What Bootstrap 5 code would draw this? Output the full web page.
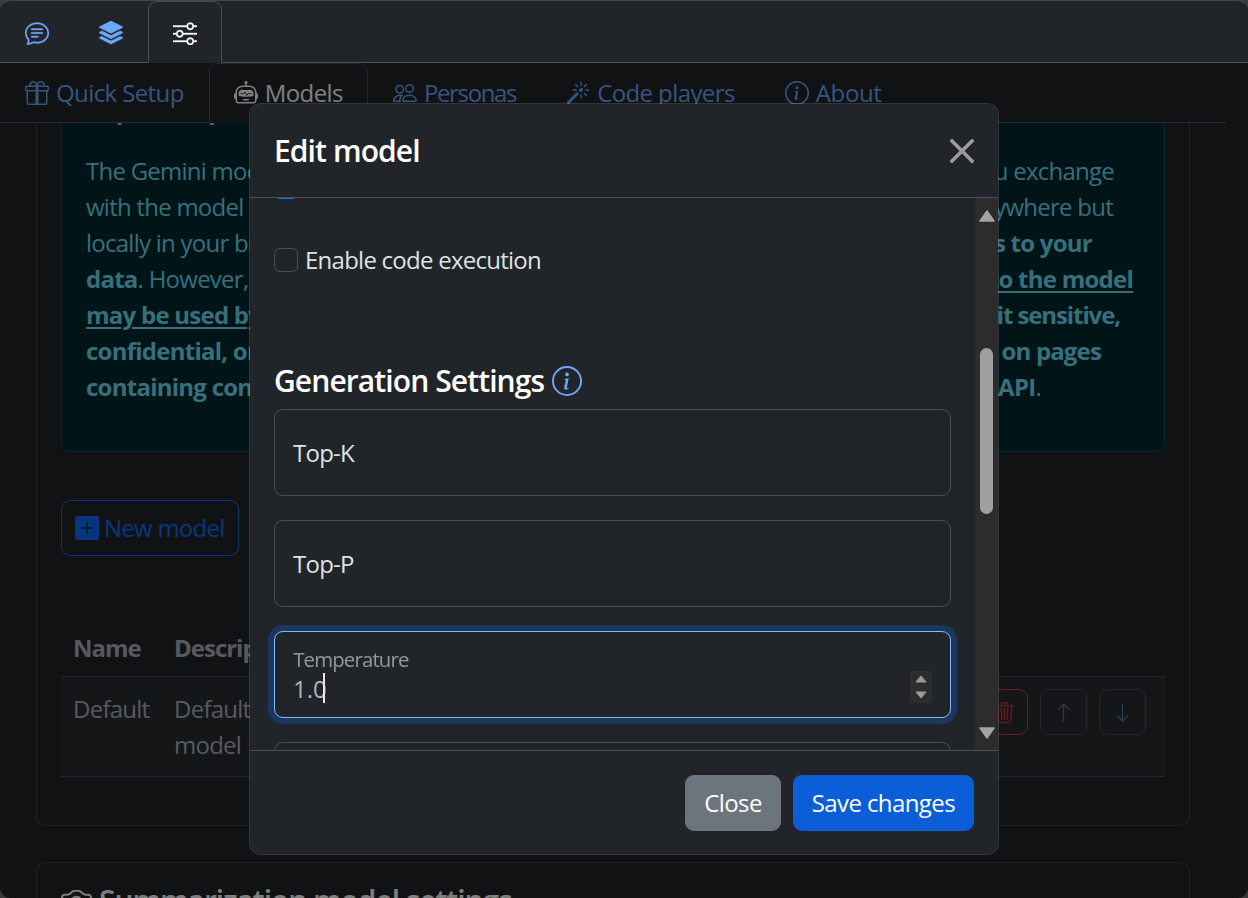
<!doctype html>
<html lang="en" data-bs-theme="dark">
<head>
<meta charset="utf-8">
<title>Edit model</title>
<link href="https://cdn.jsdelivr.net/npm/bootstrap@5.3.0/dist/css/bootstrap.min.css" rel="stylesheet">
<script src="https://cdn.jsdelivr.net/npm/bootstrap@5.3.0/dist/js/bootstrap.bundle.min.js"></script>
<style>
html{font-size:24px}
html,body{height:100%;overflow:hidden}
body{--bs-body-font-family:"Open Sans","Noto Sans",sans-serif;font-family:"Open Sans","Noto Sans",sans-serif;background:#3c3c3c;letter-spacing:-.75px;margin:0}
.shell{height:898px;display:flex;flex-direction:column;border-radius:11px;overflow:hidden;background:#212529;border-top:1px solid #44474a}
.ico{width:1em;height:1em;fill:currentColor;flex:none}
.topbar{height:62px;flex:none}
.topbar .nav-link{padding:14px 24px 12px;height:62px;display:flex;align-items:center}
.topbar .ico{stroke:currentColor;stroke-width:.2}
.stage{flex:1;position:relative;overflow:hidden;min-height:0}
.dimmer{position:absolute;inset:0;background:rgba(0,0,0,.5);z-index:1}
.pane{width:1226px;height:100%;overflow:hidden;position:relative;z-index:0}
.subnav{position:relative;z-index:1;background:#212529;height:60px;flex-wrap:nowrap;letter-spacing:-.6px}
.subnav .nav-link{padding:11px 24px 11px;display:flex;align-items:center;gap:7px;height:60px;white-space:nowrap}
.tight-tab{letter-spacing:-1.35px}
.wide-tab{letter-spacing:-.35px}
.scroller{padding:0 36px;margin-top:-32px}
.settings-card{padding:0 24px;height:735px;border-top:0}
.note{margin:0;padding:0 24px 46px;border-radius:9px}
.note-head{font-size:24px;line-height:36px;font-weight:700;margin:0 0 25px}
.note-line{display:flex;justify-content:space-between;white-space:nowrap;line-height:36px}
.note-line u{text-underline-offset:3px}
.r1{margin-right:26px}.r2{margin-right:27px}.r3{margin-right:48px}.r4{margin-right:7px}.r5{margin-right:20px;letter-spacing:-1.1px}.r6{margin-right:39px;letter-spacing:-.85px}.r7{margin-right:99px}
.new-btn{margin-top:48px;display:inline-flex;align-items:center;gap:5px;height:56px;width:178px;padding:0 13px;letter-spacing:-.75px;white-space:nowrap}
.models{margin-top:60px;margin-bottom:0}
.models th{padding:14px 12px 10px;height:56px;border-bottom-width:1px;letter-spacing:-1px}
.models td{padding:14px 12px 13px;height:100px;--bs-table-bg:rgba(255,255,255,.035)}
.cw1{width:101px}
.models td.act-cell{text-align:right;white-space:nowrap;padding:12px 19px 0 0}
.act-cell .btn{width:47px;height:46px;padding:0;display:inline-flex;align-items:center;justify-content:center;font-size:21px;margin-left:12px;--bs-btn-border-color:#495057;vertical-align:top}
.act-cell .btn.btn-outline-danger{--bs-btn-border-color:#dc3545}
.act-cell .btn.move-down{--bs-btn-color:#5a7ca0}
.next-card{margin-top:36px;padding:20px 24px;height:100px}
.next-title{font-size:30px;font-weight:600;line-height:36px;margin:0;display:flex;align-items:center;gap:7px;letter-spacing:-1.05px;white-space:nowrap}
.next-title .ico{font-size:31px}
.editor{position:absolute;left:249px;top:40px;width:750px;z-index:2;
 --bs-modal-bg:#212529;--bs-modal-color:#dee2e6;--bs-modal-border-width:1px;--bs-modal-border-color:rgba(255,255,255,.15);
 --bs-modal-border-radius:12px;--bs-modal-inner-border-radius:11px;--bs-modal-box-shadow:none;
 --bs-modal-header-padding:24px;--bs-modal-header-padding-x:24px;--bs-modal-header-padding-y:24px;
 --bs-modal-header-border-width:1px;--bs-modal-header-border-color:#495057;
 --bs-modal-footer-border-width:1px;--bs-modal-footer-border-color:#495057;--bs-modal-footer-gap:12px;--bs-modal-padding:24px;
 color:#dee2e6}
.editor .modal-title{font-size:30px;font-weight:600;line-height:45px;letter-spacing:-.9px;margin:0}
.editor .modal-header{height:94px}
.editor .btn-close{padding:0;width:28px;height:28px;margin:0 -2px 0 auto;background-size:28px;opacity:.55}
.bodywrap{display:flex;height:552px;background:#212529}
.formcol{flex:1;overflow:hidden;padding:0 24px;min-width:0}
.chk-row{display:flex;align-items:center;gap:7px;line-height:36px}
.chk-row .form-check-input{margin:0;width:24px;height:24px;flex:none}
.chk-top{margin-top:-23px;height:24px}
.chk-code{margin-top:49px;height:72px;align-items:flex-start}
.chk-code label{margin-top:-6px}
.gen-title{font-size:30px;font-weight:600;line-height:36px;margin:43px 0 10px;display:flex;align-items:center;gap:8px;letter-spacing:-.9px}
.gen-title .ico{color:#6ea8fe;font-size:30px}
.fld{margin-bottom:24px}
.fld .form-control{height:87px;min-height:87px}
.fld label{padding:25px 18px;color:#dee2e6}
.fld .form-control:not(:placeholder-shown){padding-top:41px;padding-bottom:13px}
.fld .faux-focus{border-color:#86b7fe;box-shadow:0 0 0 6px rgba(13,110,253,.25)}
.form-floating.fld>.form-control.faux-focus~label{opacity:.6;letter-spacing:-1px;padding-top:26px}
.caret-bar{position:absolute;left:49px;top:42px;width:2px;height:30px;background:#e8e8e8}
.spin{position:absolute;right:19px;top:40px;width:22px;height:32px;background:#2d2d2d;display:flex;flex-direction:column;align-items:center;justify-content:center;gap:8px}
.spin svg{width:12px;height:8px;fill:#9a9a9a;display:block;stroke:#9a9a9a;stroke-linejoin:round}
.vbar{width:23px;flex:none;background:#2c2c2c;display:flex;flex-direction:column;align-items:center}
.vbar svg{fill:#a3a3a3;width:16px;height:12px;flex:none;stroke:#a3a3a3;stroke-linejoin:round;stroke-width:1.5}
.vbar .up{margin-top:12px}
.vbar .thumb{width:13px;height:166px;background:#9f9f9f;border-radius:7px;margin-top:126px}
.vbar .down{margin-top:auto;margin-bottom:11px}
.editor .modal-footer{height:104px;padding:18px;border-top:1px solid #495057;display:flex;justify-content:flex-end;align-items:center}
.editor .btn{height:56px;margin:6px;letter-spacing:-.6px}
.editor .btn-primary{--bs-btn-bg:#0b5ed7;--bs-btn-border-color:#0b5ed7}
</style>
</head>
<body>
<svg width="0" height="0" class="d-none" aria-hidden="true">
<symbol id="i-chat" viewBox="0 0 16 16"><path d="M2.678 11.894a1 1 0 0 1 .287.801 10.97 10.97 0 0 1-.398 2c1.395-.323 2.247-.697 2.634-.893a1 1 0 0 1 .71-.074A8.06 8.06 0 0 0 8 14c3.996 0 7-2.807 7-6 0-3.192-3.004-6-7-6S1 4.808 1 8c0 1.468.617 2.83 1.678 3.894zm-.493 3.905a21.682 21.682 0 0 1-.713.129c-.2.032-.352-.176-.273-.362a9.68 9.68 0 0 0 .244-.637l.003-.01c.248-.72.45-1.548.524-2.319C.743 11.37 0 9.76 0 8c0-3.866 3.582-7 8-7s8 3.134 8 7-3.582 7-8 7a9.06 9.06 0 0 1-2.347-.306c-.52.263-1.639.742-3.468 1.105z"/><path d="M4 5.5a.5.5 0 0 1 .5-.5h7a.5.5 0 0 1 0 1h-7a.5.5 0 0 1-.5-.5zM4 8a.5.5 0 0 1 .5-.5h7a.5.5 0 0 1 0 1h-7A.5.5 0 0 1 4 8zm0 2.5a.5.5 0 0 1 .5-.5h4a.5.5 0 0 1 0 1h-4a.5.5 0 0 1-.5-.5z"/></symbol>
<symbol id="i-stack" viewBox="0 0 16 16"><path d="m14.12 10.163 1.715.858c.22.11.22.424 0 .534L8.267 15.34a.598.598 0 0 1-.534 0L.165 11.555a.299.299 0 0 1 0-.534l1.716-.858 5.317 2.659c.505.252 1.1.252 1.604 0l5.317-2.66zM7.733.063a.598.598 0 0 1 .534 0l7.568 3.784a.3.3 0 0 1 0 .535L8.267 8.165a.598.598 0 0 1-.534 0L.165 4.382a.299.299 0 0 1 0-.535L7.733.063z"/><path d="m14.12 6.576 1.715.858c.22.11.22.424 0 .534l-7.568 3.784a.598.598 0 0 1-.534 0L.165 7.968a.299.299 0 0 1 0-.534l1.716-.858 5.317 2.659c.505.252 1.1.252 1.604 0l5.317-2.659z"/></symbol>
<symbol id="i-sliders" viewBox="0 0 16 16"><path fill-rule="evenodd" d="M11.5 2a1.5 1.5 0 1 0 0 3 1.5 1.5 0 0 0 0-3zM9.05 3a2.5 2.5 0 0 1 4.9 0H16v1h-2.05a2.5 2.5 0 0 1-4.9 0H0V3h9.05zM4.5 7a1.5 1.5 0 1 0 0 3 1.5 1.5 0 0 0 0-3zM2.05 8a2.5 2.5 0 0 1 4.9 0H16v1H6.95a2.5 2.5 0 0 1-4.9 0H0V8h2.05zm9.45 4a1.5 1.5 0 1 0 0 3 1.5 1.5 0 0 0 0-3zm-2.45 1a2.5 2.5 0 0 1 4.9 0H16v1h-2.05a2.5 2.5 0 0 1-4.9 0H0v-1h9.05z"/></symbol>
<symbol id="i-gift" viewBox="0 0 16 16"><path d="M3 2.5a2.5 2.5 0 0 1 5 0 2.5 2.5 0 0 1 5 0v.006c0 .07 0 .27-.038.494H15a1 1 0 0 1 1 1v2a1 1 0 0 1-1 1v7.5a1.5 1.5 0 0 1-1.5 1.5h-11A1.5 1.5 0 0 1 1 14.5V7a1 1 0 0 1-1-1V4a1 1 0 0 1 1-1h2.038A2.968 2.968 0 0 1 3 2.506V2.5zm1.068.5H7v-.5a1.5 1.5 0 1 0-3 0c0 .085.002.274.045.43a.522.522 0 0 0 .023.07zM9 3h2.932a.56.56 0 0 0 .023-.07c.043-.156.045-.345.045-.43a1.5 1.5 0 0 0-3 0V3zM1 4v2h6V4H1zm8 0v2h6V4H9zm5 3H9v8h4.5a.5.5 0 0 0 .5-.5V7zm-7 8V7H2v7.5a.5.5 0 0 0 .5.5H7z"/></symbol>
<symbol id="i-robot" viewBox="0 0 16 16"><path d="M6 12.5a.5.5 0 0 1 .5-.5h3a.5.5 0 0 1 0 1h-3a.5.5 0 0 1-.5-.5ZM3 8.062C3 6.76 4.235 5.765 5.53 5.886a26.58 26.58 0 0 0 4.94 0C11.765 5.765 13 6.76 13 8.062v1.157a.933.933 0 0 1-.765.935c-.845.147-2.34.346-4.235.346-1.895 0-3.39-.2-4.235-.346A.933.933 0 0 1 3 9.219V8.062Zm4.542-.827a.25.25 0 0 0-.217.068l-.92.9a24.767 24.767 0 0 1-1.871-.183.25.25 0 0 0-.068.495c.55.076 1.232.149 2.02.193a.25.25 0 0 0 .189-.071l.754-.736.847 1.71a.25.25 0 0 0 .404.062l.932-.97a25.286 25.286 0 0 0 1.922-.188.25.25 0 0 0-.068-.495c-.538.074-1.207.145-1.98.189a.25.25 0 0 0-.166.076l-.754.785-.842-1.7a.25.25 0 0 0-.182-.135Z"/><path d="M8.5 1.866a1 1 0 1 0-1 0V3h-2A4.5 4.5 0 0 0 1 7.5V8a1 1 0 0 0-1 1v2a1 1 0 0 0 1 1v1a2 2 0 0 0 2 2h10a2 2 0 0 0 2-2v-1a1 1 0 0 0 1-1V9a1 1 0 0 0-1-1v-.5A4.5 4.5 0 0 0 10.5 3h-2V1.866ZM14 7.5V13a1 1 0 0 1-1 1H3a1 1 0 0 1-1-1V7.5A3.5 3.5 0 0 1 5.5 4h5A3.5 3.5 0 0 1 14 7.5Z"/></symbol>
<symbol id="i-people" viewBox="0 0 16 16"><path d="M15 14s1 0 1-1-1-4-5-4-5 3-5 4 1 1 1 1h8Zm-7.978-1A.261.261 0 0 1 7 12.996c.001-.264.167-1.03.76-1.72C8.312 10.629 9.282 10 11 10c1.717 0 2.687.63 3.24 1.276.593.69.758 1.457.76 1.72l-.008.002a.274.274 0 0 1-.014.002H7.022ZM11 7a2 2 0 1 0 0-4 2 2 0 0 0 0 4Zm3-2a3 3 0 1 1-6 0 3 3 0 0 1 6 0ZM6.936 9.28a5.88 5.88 0 0 0-1.23-.247A7.35 7.35 0 0 0 5 9c-4 0-5 3-5 4 0 .667.333 1 1 1h4.216A2.238 2.238 0 0 1 5 13c0-1.01.377-2.042 1.09-2.904.243-.294.526-.569.846-.816ZM4.92 10A5.493 5.493 0 0 0 4 13H1c0-.26.164-1.03.76-1.724.545-.636 1.492-1.256 3.16-1.275ZM1.5 5.5a3 3 0 1 1 6 0 3 3 0 0 1-6 0Zm3-2a2 2 0 1 0 0 4 2 2 0 0 0 0-4Z"/></symbol>
<symbol id="i-magic" viewBox="0 0 16 16"><path d="M9.5 2.672a.5.5 0 1 0 1 0V.843a.5.5 0 0 0-1 0v1.829Zm4.5.035A.5.5 0 0 0 13.293 2L12 3.293a.5.5 0 1 0 .707.707L14 2.707ZM7.293 4A.5.5 0 1 0 8 3.293L6.707 2A.5.5 0 0 0 6 2.707L7.293 4Zm-.621 2.5a.5.5 0 1 0 0-1H4.843a.5.5 0 1 0 0 1h1.829Zm8.485 0a.5.5 0 1 0 0-1h-1.829a.5.5 0 0 0 0 1h1.829ZM13.293 10A.5.5 0 1 0 14 9.293L12.707 8a.5.5 0 1 0-.707.707L13.293 10ZM9.5 11.157a.5.5 0 0 0 1 0V9.328a.5.5 0 0 0-1 0v1.829Zm1.854-5.097a.5.5 0 0 0 0-.706l-.708-.708a.5.5 0 0 0-.707 0L8.646 5.94a.5.5 0 0 0 0 .707l.708.708a.5.5 0 0 0 .707 0l1.293-1.293Zm-3 3a.5.5 0 0 0 0-.706l-.708-.708a.5.5 0 0 0-.707 0L.646 13.94a.5.5 0 0 0 0 .707l.708.708a.5.5 0 0 0 .707 0L8.354 9.06Z"/></symbol>
<symbol id="i-info" viewBox="0 0 16 16"><path d="M8 15A7 7 0 1 1 8 1a7 7 0 0 1 0 14zm0 1A8 8 0 1 0 8 0a8 8 0 0 0 0 16z"/><path d="m8.93 6.588-2.29.287-.082.38.45.083c.294.07.352.176.288.469l-.738 3.468c-.194.897.105 1.319.808 1.319.545 0 1.178-.252 1.465-.598l.088-.416c-.2.176-.492.246-.686.246-.275 0-.375-.193-.304-.533L8.93 6.588zM9 4.5a1 1 0 1 1-2 0 1 1 0 0 1 2 0z"/></symbol>
<symbol id="i-plus" viewBox="0 0 16 16"><path d="M2 0a2 2 0 0 0-2 2v12a2 2 0 0 0 2 2h12a2 2 0 0 0 2-2V2a2 2 0 0 0-2-2H2zm6.5 4.5v3h3a.5.5 0 0 1 0 1h-3v3a.5.5 0 0 1-1 0v-3h-3a.5.5 0 0 1 0-1h3v-3a.5.5 0 0 1 1 0z"/></symbol>
<symbol id="i-trash" viewBox="0 0 16 16"><path d="M6.5 1h3a.5.5 0 0 1 .5.5v1H6v-1a.5.5 0 0 1 .5-.5ZM11 2.5v-1A1.5 1.5 0 0 0 9.5 0h-3A1.5 1.5 0 0 0 5 1.5v1H2.506a.58.58 0 0 0-.01 0H1.5a.5.5 0 0 0 0 1h.538l.853 10.66A2 2 0 0 0 4.885 16h6.23a2 2 0 0 0 1.994-1.84l.853-10.66h.538a.5.5 0 0 0 0-1h-.995a.59.59 0 0 0-.01 0H11Zm1.958 1-.846 10.58a1 1 0 0 1-.997.92h-6.23a1 1 0 0 1-.997-.92L3.042 3.5h9.916Zm-7.487 1a.5.5 0 0 1 .528.47l.5 8.5a.5.5 0 0 1-.998.06L5 5.03a.5.5 0 0 1 .47-.53Zm5.058 0a.5.5 0 0 1 .47.53l-.5 8.5a.5.5 0 1 1-.998-.06l.5-8.5a.5.5 0 0 1 .528-.47ZM8 4.5a.5.5 0 0 1 .5.5v8.5a.5.5 0 0 1-1 0V5a.5.5 0 0 1 .5-.5Z"/></symbol>
<symbol id="i-up" viewBox="0 0 16 16"><path fill-rule="evenodd" d="M8 15a.5.5 0 0 0 .5-.5V2.707l3.146 3.147a.5.5 0 0 0 .708-.708l-4-4a.5.5 0 0 0-.708 0l-4 4a.5.5 0 1 0 .708.708L7.5 2.707V14.5a.5.5 0 0 0 .5.5z"/></symbol>
<symbol id="i-down" viewBox="0 0 16 16"><path fill-rule="evenodd" d="M8 1a.5.5 0 0 1 .5.5v11.793l3.146-3.147a.5.5 0 0 1 .708.708l-4 4a.5.5 0 0 1-.708 0l-4-4a.5.5 0 0 1 .708-.708L7.5 13.293V1.5A.5.5 0 0 1 8 1z"/></symbol>
<symbol id="i-camera" viewBox="0 0 16 16"><path d="M15 12a1 1 0 0 1-1 1H2a1 1 0 0 1-1-1V6a1 1 0 0 1 1-1h1.172a3 3 0 0 0 2.12-.879l.83-.828A1 1 0 0 1 6.827 3h2.344a1 1 0 0 1 .707.293l.828.828A3 3 0 0 0 12.828 5H14a1 1 0 0 1 1 1v6zM2 4a2 2 0 0 0-2 2v6a2 2 0 0 0 2 2h12a2 2 0 0 0 2-2V6a2 2 0 0 0-2-2h-1.172a2 2 0 0 1-1.414-.586l-.828-.828A2 2 0 0 0 9.172 2H6.828a2 2 0 0 0-1.414.586l-.828.828A2 2 0 0 1 3.172 4H2z"/><path d="M8 11a2.5 2.5 0 1 1 0-5 2.5 2.5 0 0 1 0 5zm0 1a3.5 3.5 0 1 0 0-7 3.5 3.5 0 0 0 0 7zM3 6.5a.5.5 0 1 1-1 0 .5.5 0 0 1 1 0z"/></symbol>
</svg>

<div class="shell">
  <ul class="nav nav-tabs topbar">
    <li class="nav-item"><a class="nav-link" href="#" aria-label="Chat"><svg class="ico"><use href="#i-chat"/></svg></a></li>
    <li class="nav-item"><a class="nav-link" href="#" aria-label="Sessions"><svg class="ico"><use href="#i-stack"/></svg></a></li>
    <li class="nav-item"><a class="nav-link active" href="#" aria-label="Settings"><svg class="ico"><use href="#i-sliders"/></svg></a></li>
  </ul>
  <div class="stage">
    <div class="pane">
      <ul class="nav nav-tabs subnav">
        <li class="nav-item"><a class="nav-link" href="#"><svg class="ico"><use href="#i-gift"/></svg>Quick Setup</a></li>
        <li class="nav-item"><a class="nav-link active" href="#"><svg class="ico"><use href="#i-robot"/></svg>Models</a></li>
        <li class="nav-item"><a class="nav-link tight-tab" href="#"><svg class="ico"><use href="#i-people"/></svg>Personas</a></li>
        <li class="nav-item"><a class="nav-link" href="#"><svg class="ico"><use href="#i-magic"/></svg>Code players</a></li>
        <li class="nav-item"><a class="nav-link wide-tab" href="#"><svg class="ico"><use href="#i-info"/></svg>About</a></li>
      </ul>
      <div class="scroller">
        <div class="card settings-card">
          <div class="alert alert-info note" role="alert">
            <p class="note-head">Important privacy note</p>
            <div class="note-line"><span>The Gemini models are free to use.</span><span class="r1">Everything you exchange</span></div>
            <div class="note-line"><span>with the model is private.</span><span class="r2">It is not stored anywhere but</span></div>
            <div class="note-line"><span>locally in your browser.</span><span class="r3"><strong>Nobody gets access to your</strong></span></div>
            <div class="note-line"><strong class="d-inline">data</strong><span class="flex-grow-1">. However, on the free tier,</span><span class="r4"><strong><u>what you send to the model</u></strong></span></div>
            <div class="note-line"><strong><u>may be used by Google</u></strong><span class="r5"><strong>Do not submit sensitive,</strong></span></div>
            <div class="note-line"><strong>confidential, or personal data</strong><span class="r6"><strong>See the information on pages</strong></span></div>
            <div class="note-line"><strong>containing conditions</strong><span class="r7"><strong>of the Gemini API</strong>.</span></div>
          </div>
          <div><button type="button" class="btn btn-outline-primary new-btn"><svg class="ico"><use href="#i-plus"/></svg>New model</button></div>
          <table class="table models">
            <thead><tr><th class="cw1">Name</th><th>Description</th><th></th></tr></thead>
            <tbody><tr>
              <td>Default</td>
              <td>Default settings for<br>model</td>
              <td class="act-cell"><button type="button" class="btn btn-outline-danger" aria-label="Delete"><svg class="ico"><use href="#i-trash"/></svg></button><button type="button" class="btn btn-outline-secondary" aria-label="Move up"><svg class="ico"><use href="#i-up"/></svg></button><button type="button" class="btn btn-outline-primary move-down" aria-label="Move down"><svg class="ico"><use href="#i-down"/></svg></button></td>
            </tr></tbody>
          </table>
        </div>
        <div class="card next-card">
          <h5 class="next-title"><svg class="ico"><use href="#i-camera"/></svg>Summarization model settings</h5>
        </div>
      </div>
    </div>
    <div class="dimmer"></div>
    <div class="modal-content editor">
      <div class="modal-header">
        <h1 class="modal-title">Edit model</h1>
        <button type="button" class="btn-close" aria-label="Close"></button>
      </div>
      <div class="bodywrap">
        <div class="formcol">
          <div class="chk-row chk-top"><input class="form-check-input" type="checkbox" checked aria-label="Enabled"></div>
          <div class="chk-row chk-code"><input class="form-check-input" type="checkbox" id="codeExec"><label for="codeExec">Enable code execution</label></div>
          <h5 class="gen-title">Generation Settings <svg class="ico"><use href="#i-info"/></svg></h5>
          <div class="form-floating fld"><input type="text" class="form-control" id="topK" placeholder=" "><label for="topK">Top-K</label></div>
          <div class="form-floating fld"><input type="text" class="form-control" id="topP" placeholder=" "><label for="topP">Top-P</label></div>
          <div class="form-floating fld position-relative"><input type="text" class="form-control faux-focus" id="temp" placeholder=" " value="1.0"><label for="temp">Temperature</label><span class="caret-bar"></span>
            <span class="spin"><svg viewBox="0 0 12 8"><path d="M6 1l5 6H1z"/></svg><svg viewBox="0 0 12 8"><path d="M6 7L1 1h10z"/></svg></span></div>
          <div class="form-floating fld"><input type="text" class="form-control" id="maxT" placeholder=" "></div>
        </div>
        <div class="vbar">
          <svg class="up" viewBox="0 0 16 12"><path d="M8 1l7 10H1z"/></svg>
          <div class="thumb"></div>
          <svg class="down" viewBox="0 0 16 12"><path d="M8 11L1 1h14z"/></svg>
        </div>
      </div>
      <div class="modal-footer">
        <button type="button" class="btn btn-secondary">Close</button>
        <button type="button" class="btn btn-primary">Save changes</button>
      </div>
    </div>
  </div>
</div>
</body>
</html>
